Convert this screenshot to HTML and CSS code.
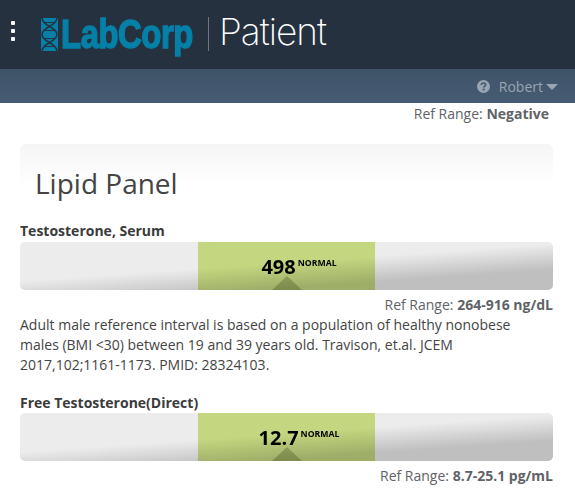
FILE: index.html
```html
<!DOCTYPE html>
<html lang="en">
<head>
<meta charset="utf-8">
<title>LabCorp Patient</title>
<link rel="stylesheet" href="styles.css">
</head>
<body>
<header class="topbar">
  <div class="kebab"><i></i><i></i><i></i></div>
  <div class="logo">
    <svg class="helix" width="17" height="33" viewBox="0 0 17 33">
      <rect width="17" height="33" fill="#0580a8"/>
      <path d="M1 0C1 8 16 9 16 16.500C16 24 1 25 1 33M16 0C16 8 1 9 1 16.500C1 24 16 25 16 33" fill="none" stroke="#263140" stroke-width="1.600"/>
      <path d="M4 4.500H13M7 8H10M4 12.500H13M4 20.500H13M7 25H10M4 28.500H13" stroke="#263140" stroke-width="1"/>
    </svg>
    <span class="wordmark">LabCorp</span>
  </div>
  <div class="divider"></div>
  <div class="product">Patient</div>
</header>
<nav class="subbar">
  <svg class="help" width="13" height="13" viewBox="0 0 13 13">
    <circle cx="6.500" cy="6.500" r="6.500" fill="#9aa5b1"/>
    <path d="M4.300 5C4.400 3.600 5.300 3 6.500 3C7.800 3 8.700 3.700 8.700 4.800C8.700 6.200 6.700 6.100 6.700 7.600" fill="none" stroke="#435970" stroke-width="1.700"/>
    <rect x="5.700" y="8.600" width="2" height="1.800" fill="#435970"/>
  </svg>
  <span class="user">Robert</span>
  <span class="caret"></span>
</nav>
<main class="content">
  <p class="ref ref-top">Ref Range: <b>Negative</b></p>
  <h1 class="panel-title">Lipid Panel</h1>

  <section class="test first">
    <h2 class="test-name">Testosterone, Serum</h2>
    <div class="bar">
      <div class="side"></div>
      <div class="mid">
        <span class="value">498</span><span class="status">NORMAL</span>
        <span class="marker"></span>
      </div>
      <div class="side"></div>
    </div>
    <p class="ref">Ref Range: <b>264-916 ng/dL</b></p>
    <p class="note">Adult male reference interval is based on a population of healthy nonobese males (BMI &lt;30) between 19 and 39 years old. Travison, et.al. JCEM 2017,102;1161-1173. PMID: 28324103.</p>
  </section>

  <section class="test second">
    <h2 class="test-name">Free Testosterone(Direct)</h2>
    <div class="bar">
      <div class="side"></div>
      <div class="mid">
        <span class="value">12.7</span><span class="status">NORMAL</span>
        <span class="marker"></span>
      </div>
      <div class="side"></div>
    </div>
    <p class="ref">Ref Range: <b>8.7-25.1 pg/mL</b></p>
  </section>
</main>
</body>
</html>
```
FILE: styles.css
```css
* { box-sizing: border-box; }
html, body { margin: 0; padding: 0; height: 500px; overflow: hidden; }
body { background: #fff; font-family: "Open Sans", sans-serif; font-size: 14px; line-height: 20px; color: #555; }

.topbar { height: 69px; background: #263140; display: flex; align-items: center; padding-left: 10px; }
.kebab { width: 6px; display: flex; flex-direction: column; gap: 4px; align-items: center; margin-right: 25px; margin-top: -7px; }
.kebab i { width: 4px; height: 4px; background: #fff; border-radius: 1px; display: block; }
.logo { display: flex; align-items: center; gap: 3px; width: 167px; margin-top: -1px; }
.helix { display: block; flex: none; }
.wordmark { font-family: "Liberation Sans", sans-serif; font-weight: 700; font-size: 40px; line-height: 40px; color: #0580a8; display: inline-block; transform: scaleX(0.82); transform-origin: left center; letter-spacing: -0.5px; -webkit-text-stroke: 1.5px #0580a8; }
.divider { width: 1px; height: 34px; background: #6d7681; margin-right: 11px; margin-top: -2px; }
.product { font-family: "Inter", sans-serif; font-weight: 200; font-size: 37px; line-height: 40px; color: #fff; margin-top: -6px; margin-left: -1px; letter-spacing: -1px; }

.subbar { height: 34px; background: linear-gradient(#3f5367, #465c74); display: flex; align-items: center; justify-content: flex-end; padding-right: 17px; color: #9aa5b1; }
.help { margin-right: 9px; }
.user { font-size: 14px; margin-top: 1px; }
.caret { width: 0; height: 0; border-left: 6px solid transparent; border-right: 6px solid transparent; border-top: 6px solid #9aa5b1; margin-left: 3px; margin-top: 1px; }

.content { padding: 0 22px 0 20px; }
.ref { margin: 0; text-align: right; font-size: 14px; line-height: 20px; color: #5f6368; }
.ref b { font-weight: 700; }
.ref-top { margin-top: 1px; padding-right: 4px; }

.panel-title { margin: 20px 0 0; height: 68px; padding: 21px 15px 0; font-size: 28px; line-height: 36px; font-weight: 400; color: #444; background: linear-gradient(#f5f5f5, #fff 60%); border-radius: 6px 6px 0 0; }

.test-name { margin: 0; font-size: 14px; line-height: 20px; font-weight: 700; color: #3b3b3b; }
.first { margin-top: 9px; }
.second { margin-top: 18px; }

.bar { height: 48px; margin-top: 1px; display: flex; border-radius: 5px; overflow: hidden; isolation: isolate; background: linear-gradient(176deg, #ececec 46%, #bfbfbf 76%); }
.second .bar { margin-top: 0; }
.side { flex: 1; }
.mid { position: relative; width: 177px; flex: none; display: flex; justify-content: center; align-items: flex-start; padding: 13px 0 0 25px; color: #000; background: #d4e88a; mix-blend-mode: multiply; }
.value { font-size: 20px; line-height: 24px; font-weight: 700; }
.status { font-size: 8.7px; line-height: 10px; font-weight: 700; margin-left: 2px; margin-top: 3px; }
.marker { position: absolute; left: 50%; bottom: 0; margin-left: -15px; width: 0; height: 0; border-left: 15px solid transparent; border-right: 15px solid transparent; border-bottom: 14px solid #a8bb68; }

.test .ref { margin-top: 5px; }
.note { margin: 0; padding-right: 10px; font-size: 14px; line-height: 20px; color: #444; }
```
